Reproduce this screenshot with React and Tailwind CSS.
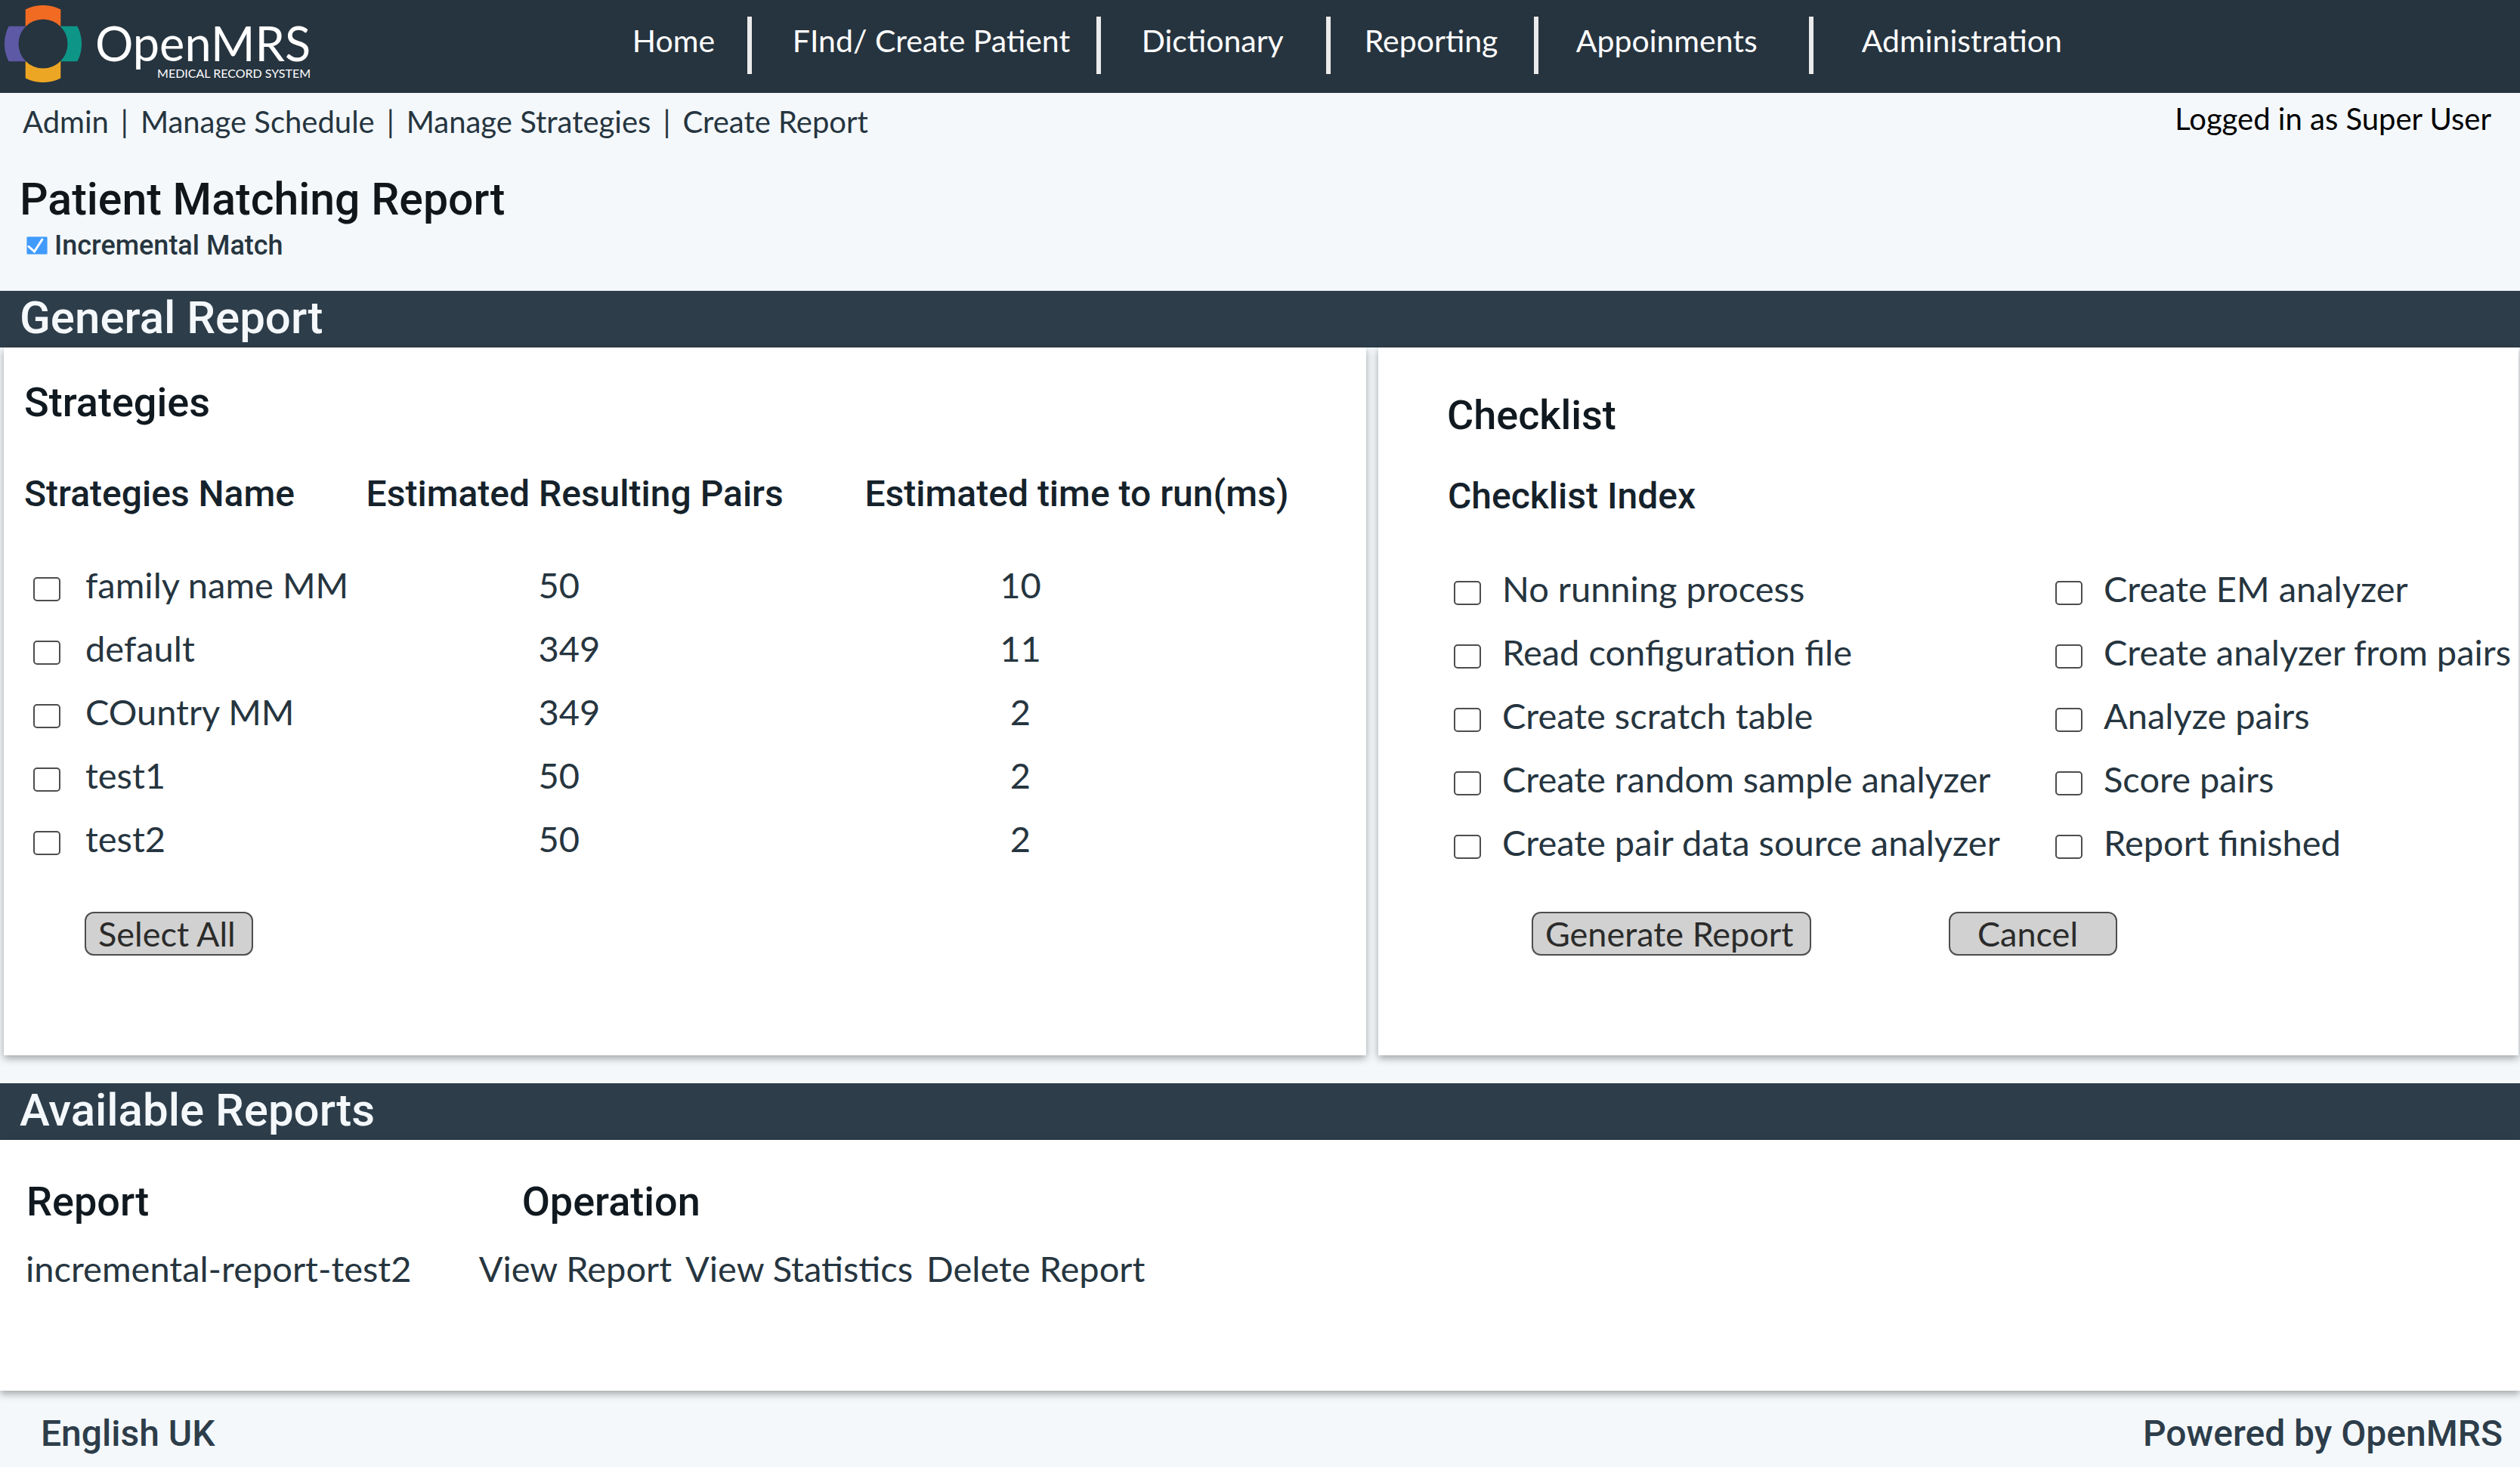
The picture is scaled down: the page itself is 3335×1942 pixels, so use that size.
import React from "react";

const NAV = [
  { label: "Home", slot: "w-[155px] pl-[3px]" },
  { label: "FInd/ Create Patient", slot: "w-[462px] pl-[54px]" },
  { label: "Dictionary", slot: "w-[304px] pl-[54px]" },
  { label: "Reporting", slot: "w-[275px] pl-[45px]" },
  { label: "Appoinments", slot: "w-[364px] pl-[50px]" },
  { label: "Administration", slot: "pl-[64px]" },
];

const CRUMBS = ["Admin", "Manage Schedule", "Manage Strategies", "Create Report"];

const STRATEGIES = [
  { name: "family name MM", pairs: 50, time: 10 },
  { name: "default", pairs: 349, time: 11 },
  { name: "COuntry MM", pairs: 349, time: 2 },
  { name: "test1", pairs: 50, time: 2 },
  { name: "test2", pairs: 50, time: 2 },
];

const CHECKLIST = [
  "No running process",
  "Read configuration file",
  "Create scratch table",
  "Create random sample analyzer",
  "Create pair data source analyzer",
  "Create EM analyzer",
  "Create analyzer from pairs",
  "Analyze pairs",
  "Score pairs",
  "Report finished",
];

function LogoMark() {
  return (
    <svg viewBox="-51 -51 102 102" className="size-[102px] shrink-0" aria-hidden="true">
      <path fill="#f26b23" d="M-23.3-45.4A51 51 0 0 1 23.3-45.4V-22.7A32.5 32.5 0 0 0-23.3-22.7Z" />
      <path fill="#0d9688" d="M45.4-23.3A51 51 0 0 1 45.4 23.3H22.7A32.5 32.5 0 0 0 22.7-23.3Z" />
      <path fill="#eda623" d="M23.3 45.4A51 51 0 0 1-23.3 45.4V22.7A32.5 32.5 0 0 0 23.3 22.7Z" />
      <path fill="#5e59a5" d="M-45.4 23.3A51 51 0 0 1-45.4-23.3H-22.7A32.5 32.5 0 0 0-22.7 23.3Z" />
    </svg>
  );
}

function CheckItem({ id, label, gap }) {
  return (
    <div className={`flex h-[84px] items-center ${gap}`}>
      <input
        id={id}
        type="checkbox"
        className="mt-3 h-8 w-9 shrink-0 appearance-none rounded-[5px] border-2 border-[#4d4d4d] bg-white checked:bg-[#409fff]"
      />
      <label htmlFor={id} className="whitespace-nowrap">
        {label}
      </label>
    </div>
  );
}

function Button({ className, children }) {
  return (
    <button
      type="button"
      className={`block h-[58px] rounded-[12px] border-2 border-[#4d4d4d] bg-[#d1d1d1] text-left text-[45px] leading-[54px] whitespace-nowrap text-[#2b2b2b] ${className}`}
    >
      {children}
    </button>
  );
}

function SectionBar({ children }) {
  return (
    <h2 className="h-[75px] bg-[#2d3d4a] px-[26px] font-['Roboto',sans-serif] text-[60px] leading-[72px] font-medium text-[#f4f8fb]">
      {children}
    </h2>
  );
}

const PANEL = "bg-white shadow-[0_4px_10px_rgba(0,0,0,0.35)]";
const H3 = "font-['Roboto',sans-serif] text-[54px] leading-[64px] font-medium text-[#10191f]";
const HEAD = "font-['Roboto',sans-serif] text-[48px] leading-[56px] font-medium whitespace-nowrap text-[#15222b]";

export default function App() {
  return (
    <div className="flex min-h-screen flex-col bg-[#f4f8fb] font-['Lato',sans-serif] text-[47px] text-[#26353f]">
      <header className="flex h-[123px] bg-[#26343f] text-white">
        <a href="#" className="flex w-1/4 pt-[7px] pl-[6px]">
          <LogoMark />
          <span className="ml-[18px] flex flex-col items-end pt-5">
            <span className="text-[63px] leading-[60px]">OpenMRS</span>
            <span className="text-[16px] leading-5">MEDICAL RECORD SYSTEM</span>
          </span>
        </a>
        <nav className="pt-[22px]">
          <ul className="flex text-[41px] leading-[64px] whitespace-nowrap">
            {NAV.map(({ label, slot }, i) => (
              <li
                key={label}
                className={`h-[76px] ${slot} ${i > 0 ? "border-l-[6px] border-[#ebebeb]" : ""}`}
              >
                <a href="#">{label}</a>
              </li>
            ))}
          </ul>
        </nav>
      </header>

      <div className="flex h-[62px] items-start justify-between pt-[14px] pr-[38px] pl-[30px] text-[40px] whitespace-nowrap">
        <ol className="flex leading-[48px]">
          {CRUMBS.map((c, i) => (
            <li key={c} className="flex">
              {i > 0 && <span className="w-[42px] text-center">|</span>}
              <a href="#">{c}</a>
            </li>
          ))}
        </ol>
        <p className="leading-10 text-black">Logged in as Super User</p>
      </div>

      <div className="pt-[47px] pb-10 pl-[26px] font-['Roboto',sans-serif] font-medium">
        <h1 className="text-[59px] leading-[64px] text-[#10161a]">Patient Matching Report</h1>
        <div className="mt-[9px] ml-[9px] flex items-center gap-[9px] text-[36px] leading-10">
          <span className="relative h-6 w-7">
            <input
              id="incremental"
              type="checkbox"
              defaultChecked
              className="peer block h-6 w-7 appearance-none rounded-[2px] border border-[#8cc2fb] bg-white checked:bg-[#409bfd]"
            />
            <svg
              viewBox="0 0 28 24"
              className="pointer-events-none absolute inset-0 hidden h-6 w-7 peer-checked:block"
              aria-hidden="true"
            >
              <path d="M2 12.5L10.5 20L21.5 3" fill="none" stroke="#fff" strokeWidth="3" />
            </svg>
          </span>
          <label htmlFor="incremental">Incremental Match</label>
        </div>
      </div>

      <SectionBar>General Report</SectionBar>
      <div className="grid grid-cols-[1803fr_1509fr] gap-4 pr-[2px] pl-[5px]">
        <section className={`${PANEL} pt-[41px] pb-[132px]`}>
          <h3 className={`${H3} pl-[27px]`}>Strategies</h3>
          <table className="mt-[61px] w-full table-fixed text-left">
            <colgroup>
              <col className="w-[26.6%]" />
              <col className="w-[36.6%]" />
              <col />
            </colgroup>
            <thead>
              <tr>
                <th className={`${HEAD} pb-[50px] pl-[27px]`}>Strategies Name</th>
                <th className={`${HEAD} pb-[50px]`}>Estimated Resulting Pairs</th>
                <th className={`${HEAD} pb-[50px]`}>Estimated time to run(ms)</th>
              </tr>
            </thead>
            <tbody>
              {STRATEGIES.map(({ name, pairs, time }) => (
                <tr key={name} className="h-[84px] leading-[84px]">
                  <td className="pl-[39px]">
                    <CheckItem id={name} label={name} gap="gap-[33px]" />
                  </td>
                  <td className="pl-[228px]">{pairs}</td>
                  <td className="pl-[178px]">
                    <span className="block w-14 text-center">{time}</span>
                  </td>
                </tr>
              ))}
            </tbody>
          </table>
          <Button className="mt-[55px] ml-[107px] w-[223px] pl-4">Select All</Button>
        </section>

        <section className={`${PANEL} pt-[58px]`}>
          <h3 className={`${H3} pl-[91px]`}>Checklist</h3>
          <h4 className={`${HEAD} mt-[47px] pl-[92px]`}>Checklist Index</h4>
          <div className="mt-[52px] grid grid-flow-col grid-cols-[796fr_613fr] grid-rows-5 pl-[100px]">
            {CHECKLIST.map((item) => (
              <CheckItem key={item} id={item} label={item} gap="gap-7" />
            ))}
          </div>
          <div className="mt-[50px] flex gap-[182px] pl-[203px]">
            <Button className="w-[370px] pl-4">Generate Report</Button>
            <Button className="w-[223px] pl-9">Cancel</Button>
          </div>
        </section>
      </div>

      <div className="mt-[37px]">
        <SectionBar>Available Reports</SectionBar>
        <section className={`${PANEL} pt-[50px] pb-[132px]`}>
          <table className="w-full table-fixed text-left whitespace-nowrap">
            <colgroup>
              <col className="w-[19%]" />
              <col />
            </colgroup>
            <thead>
              <tr>
                <th className={`${H3} pb-[26px] pl-[35px]`}>Report</th>
                <th className={`${H3} pb-[26px] pl-[57px]`}>Operation</th>
              </tr>
            </thead>
            <tbody>
              <tr className="leading-[60px]">
                <td className="pl-[34px]">incremental-report-test2</td>
                <td>
                  <div className="flex gap-[18px]">
                    <a href="#">View Report</a>
                    <a href="#">View Statistics</a>
                    <a href="#">Delete Report</a>
                  </div>
                </td>
              </tr>
            </tbody>
          </table>
        </section>
      </div>

      <footer className="flex justify-between pt-[29px] pr-[23px] pb-[14px] pl-[54px] font-['Roboto',sans-serif] text-[48px] leading-[56px] font-medium text-[#2d3d4a]">
        <span>English UK</span>
        <span>Powered by OpenMRS</span>
      </footer>
    </div>
  );
}
